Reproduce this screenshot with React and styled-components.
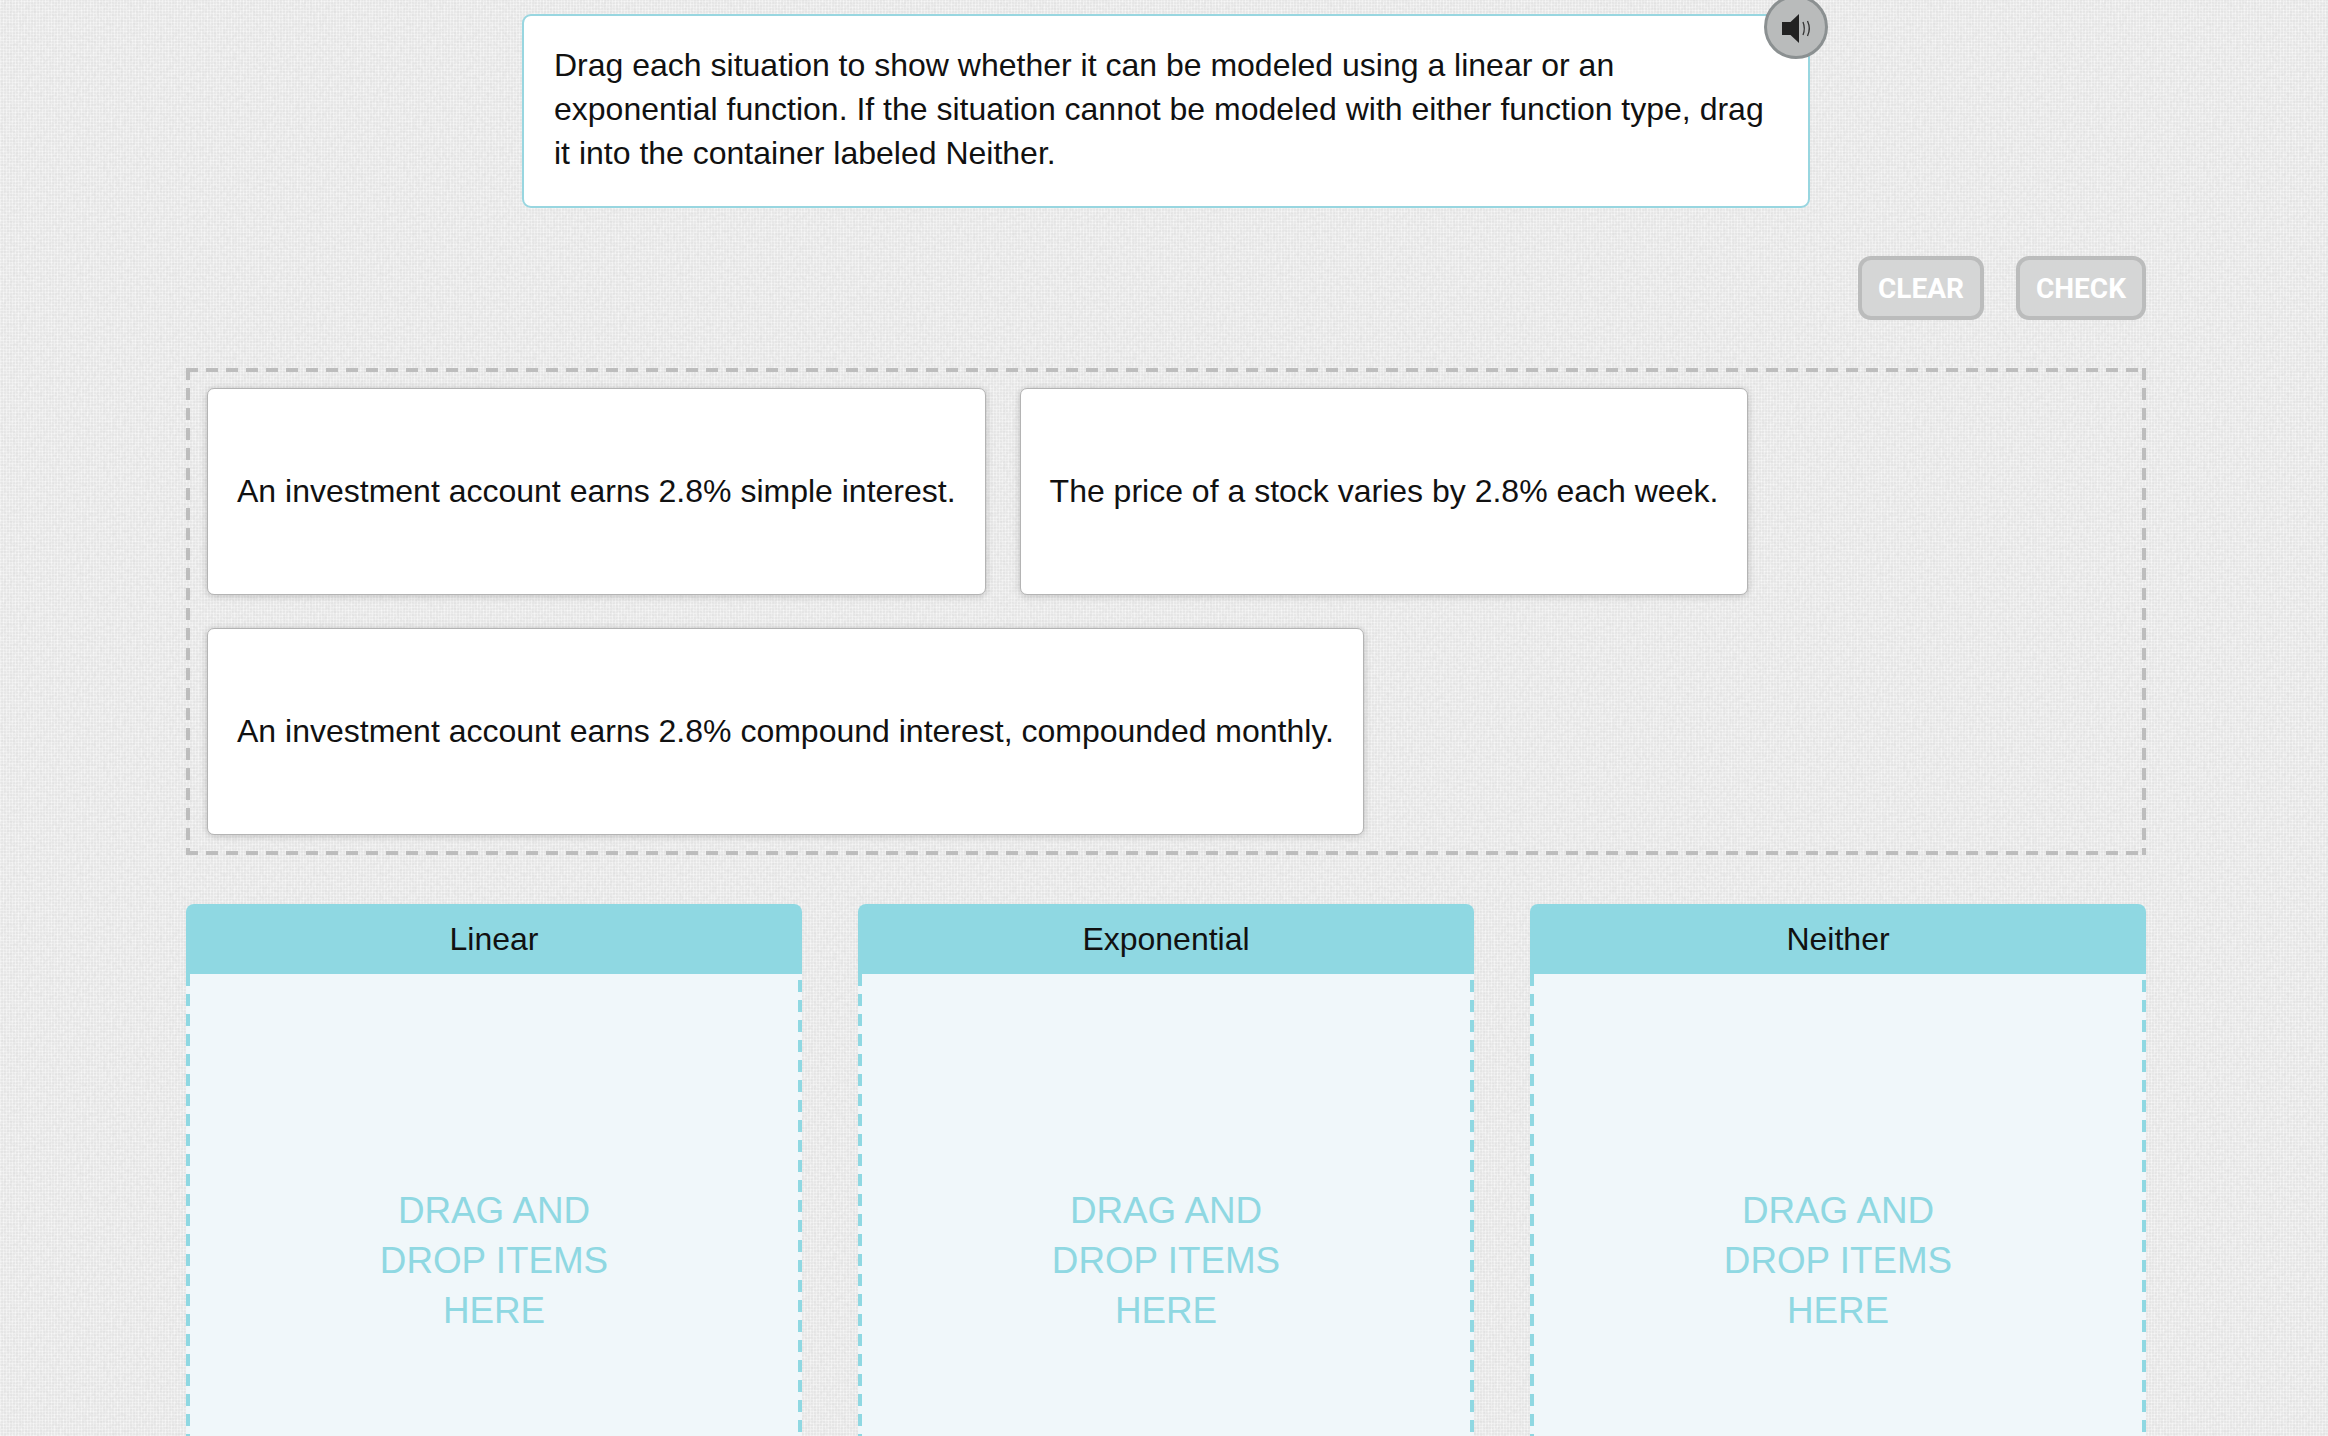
import React from "react";
import styled, { createGlobalStyle, css } from "styled-components";

const noise = encodeURIComponent(
  `<svg xmlns="http://www.w3.org/2000/svg" width="300" height="300"><filter id="n"><feTurbulence type="fractalNoise" baseFrequency="0.3" numOctaves="3" stitchTiles="stitch"/><feColorMatrix values="0 0 0 0 0.6  0 0 0 0 0.6  0 0 0 0 0.6  0 0 0 0.5 -0.18"/></filter><rect width="300" height="300" filter="url(#n)"/></svg>`
);

const GlobalStyle = createGlobalStyle`
  html, body {
    margin: 0;
    padding: 0;
    height: 1436px;
    overflow: hidden;
  }
  body {
    font-family: "Liberation Sans", Arial, sans-serif;
    color: #111;
    background-color: #eeeeee;
    background-image:
      url("data:image/svg+xml,${noise}"),
      repeating-linear-gradient(90deg, rgba(255,255,255,0.3) 0 1px, rgba(0,0,0,0.012) 1px 3px),
      repeating-linear-gradient(0deg, rgba(255,255,255,0.3) 0 1px, rgba(0,0,0,0.012) 1px 3px);
  }
`;

// chrome's own dashed border has shorter dashes than the reference
const dashedSides = (color, sides) => css`
  background-image:
    ${sides === "all"
      ? css`
          linear-gradient(90deg, ${color} 12px, transparent 12px),
          linear-gradient(90deg, ${color} 12px, transparent 12px),
        `
      : ""}
    linear-gradient(180deg, ${color} 12px, transparent 12px),
    linear-gradient(180deg, ${color} 12px, transparent 12px);
  background-repeat: ${sides === "all" ? "repeat-x, repeat-x, repeat-y, repeat-y" : "repeat-y, repeat-y"};
  background-size: ${sides === "all" ? "20px 4px, 20px 4px, 4px 20px, 4px 20px" : "4px 20px, 4px 20px"};
`;

const Page = styled.div`
  width: 1960px;
  margin-left: 186px;
  padding-top: 14px;
`;

const Instructions = styled.div`
  position: relative;
  box-sizing: border-box;
  width: 1288px;
  height: 194px;
  margin: 0 auto;
  padding: 27px 30px 0;
  background: #fff;
  border: 2px solid #98d6e0;
  border-radius: 9px;
  font-size: 32px;
  line-height: 44px;
`;

const SoundButton = styled.div`
  position: absolute;
  top: -21px;
  right: -20px;
  box-sizing: border-box;
  width: 64px;
  height: 64px;
  background: #b9bbbb;
  border: 3px solid #8b9091;
  border-radius: 50%;
  display: flex;
  align-items: center;
  justify-content: center;
`;

const Toolbar = styled.div`
  display: flex;
  justify-content: flex-end;
  gap: 32px;
  margin: 48px 0 48px;
`;

const ToolButton = styled.button`
  box-sizing: border-box;
  height: 64px;
  width: ${(p) => p.$width}px;
  padding: 0;
  background: #d5d6d6;
  border: 4px solid #bbbcbc;
  border-radius: 13px;
  color: #fff;
  font-family: Roboto, sans-serif;
  font-weight: 700;
  font-size: 28px;
`;

const Tray = styled.div`
  box-sizing: border-box;
  height: 487px;
  padding: 20px 20px 20px 21px;
  display: flex;
  flex-wrap: wrap;
  align-content: flex-start;
  gap: 33px 34px;
  ${dashedSides("#bdbdbd", "all")}
  background-position: 0 0, 0 100%, 0 0, 100% 0;
`;

const Card = styled.div`
  box-sizing: border-box;
  height: 207px;
  padding: 0 29px;
  display: flex;
  align-items: center;
  background: #fff;
  border: 1px solid #b4b4b4;
  border-radius: 7px;
  box-shadow: 0 1px 7px rgba(0, 0, 0, 0.2);
  font-size: 32px;
  white-space: nowrap;
`;

const Columns = styled.div`
  display: grid;
  grid-template-columns: repeat(3, 616px);
  justify-content: space-between;
  margin-top: 49px;
`;

const Column = styled.section`
  display: flex;
  flex-direction: column;
`;

const ColumnHead = styled.div`
  box-sizing: border-box;
  height: 70px;
  padding-top: 1px;
  display: flex;
  align-items: center;
  justify-content: center;
  background: #8fd8e2;
  border-radius: 8px 8px 0 0;
  font-size: 32px;
`;

const DropZone = styled.div`
  box-sizing: border-box;
  height: 573px;
  display: flex;
  align-items: center;
  justify-content: center;
  background-color: #f0f7fa;
  ${dashedSides("#8fd8e2", "sides")}
  background-position: 0 0, 100% 6px;
  color: #8fd8e2;
  font-size: 36.8px;
  line-height: 50px;
  text-align: center;
`;

function SpeakerIcon() {
  return (
    <svg width="32" height="32" viewBox="0 0 32 32">
      <path d="M2 11h8.5L19 3v29l-8.5-8H2z" fill="#222" />
      <path d="M23 11q2.6 6.5 0 13M27.5 10q3.6 7.5 0 15" fill="none" stroke="#333" strokeWidth="1.3" />
    </svg>
  );
}

const situations = [
  "An investment account earns 2.8% simple interest.",
  "The price of a stock varies by 2.8% each week.",
  "An investment account earns 2.8% compound interest, compounded monthly.",
];

const bins = ["Linear", "Exponential", "Neither"];

export default function App() {
  return (
    <Page>
      <GlobalStyle />
      <Instructions>
        Drag each situation to show whether it can be modeled using a linear or an exponential function. If the situation cannot be modeled with either function type, drag it into the container labeled Neither.
        <SoundButton>
          <SpeakerIcon />
        </SoundButton>
      </Instructions>
      <Toolbar>
        <ToolButton $width={126}>CLEAR</ToolButton>
        <ToolButton $width={130}>CHECK</ToolButton>
      </Toolbar>
      <Tray>
        {situations.map((text) => (
          <Card key={text}>{text}</Card>
        ))}
      </Tray>
      <Columns>
        {bins.map((name) => (
          <Column key={name}>
            <ColumnHead>{name}</ColumnHead>
            <DropZone>
              DRAG AND
              <br />
              DROP ITEMS
              <br />
              HERE
            </DropZone>
          </Column>
        ))}
      </Columns>
    </Page>
  );
}
